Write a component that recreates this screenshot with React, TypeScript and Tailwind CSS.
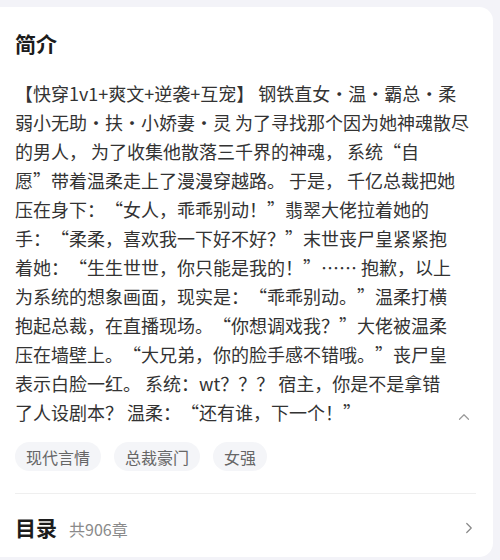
import { ChevronRight, ChevronUp } from "lucide-react";

const introLines = [
  "【快穿1v1+爽文+逆袭+互宠】 钢铁直女·温·霸总·柔",
  "弱小无助·扶·小娇妻·灵 为了寻找那个因为她神魂散尽",
  "的男人， 为了收集他散落三千界的神魂， 系统“自",
  "愿”带着温柔走上了漫漫穿越路。 于是， 千亿总裁把她",
  "压在身下：“女人，乖乖别动！”翡翠大佬拉着她的",
  "手：“柔柔，喜欢我一下好不好？”末世丧尸皇紧紧抱",
  "着她：“生生世世，你只能是我的！”…… 抱歉，以上",
  "为系统的想象画面，现实是：“乖乖别动。”温柔打横",
  "抱起总裁，在直播现场。“你想调戏我？”大佬被温柔",
  "压在墙壁上。“大兄弟，你的脸手感不错哦。”丧尸皇",
  "表示白脸一红。 系统：wt？？？ 宿主，你是不是拿错",
];

const lastLine = "了人设剧本？ 温柔：“还有谁，下一个！”";

const tags = ["现代言情", "总裁豪门", "女强"];

export default function App() {
  return (
    <div
      className="w-[500px] h-[560px] bg-[#f3f3f8] pt-[7px] pr-[7px] overflow-hidden [text-spacing-trim:space-all]"
      style={{ fontFamily: '"Noto Sans CJK SC", "Noto Sans", sans-serif' }}
    >
      <div className="bg-white rounded-r-[14px] h-[550px] pt-[22px] pl-[15px] pr-[17px]">
        <h2 className="text-[21px] leading-[28px] font-bold text-[#1c1c1c]">简介</h2>

        <div className="mt-[22px] text-[18px] leading-[29px] text-[#333]">
          {introLines.map((line) => (
            <div key={line} className="whitespace-nowrap">{line}</div>
          ))}
          <div className="flex items-center justify-between h-[29px]">
            <span className="whitespace-nowrap">{lastLine}</span>
            <ChevronUp size={18} strokeWidth={1.6} className="text-[#9a9a9a] mr-[3px] mt-[8px]" />
          </div>
        </div>

        <div className="flex gap-[13px] mt-[15px]">
          {tags.map((t) => (
            <span
              key={t}
              className="h-[29px] px-[11px] rounded-full bg-[#f4f5f8] text-[16px] text-[#666] flex items-center"
            >
              {t}
            </span>
          ))}
        </div>

        <div className="mt-[22px] h-px bg-[#efefef]" />

        <div className="flex items-center justify-between h-[68px]">
          <div className="flex items-baseline gap-[12px]">
            <span className="text-[21px] font-bold text-[#1c1c1c]">目录</span>
            <span className="text-[16px] text-[#8a8a8a]">共906章</span>
          </div>
          <ChevronRight size={18} strokeWidth={1.6} className="text-[#888] -mr-[2px]" />
        </div>
      </div>
    </div>
  );
}
